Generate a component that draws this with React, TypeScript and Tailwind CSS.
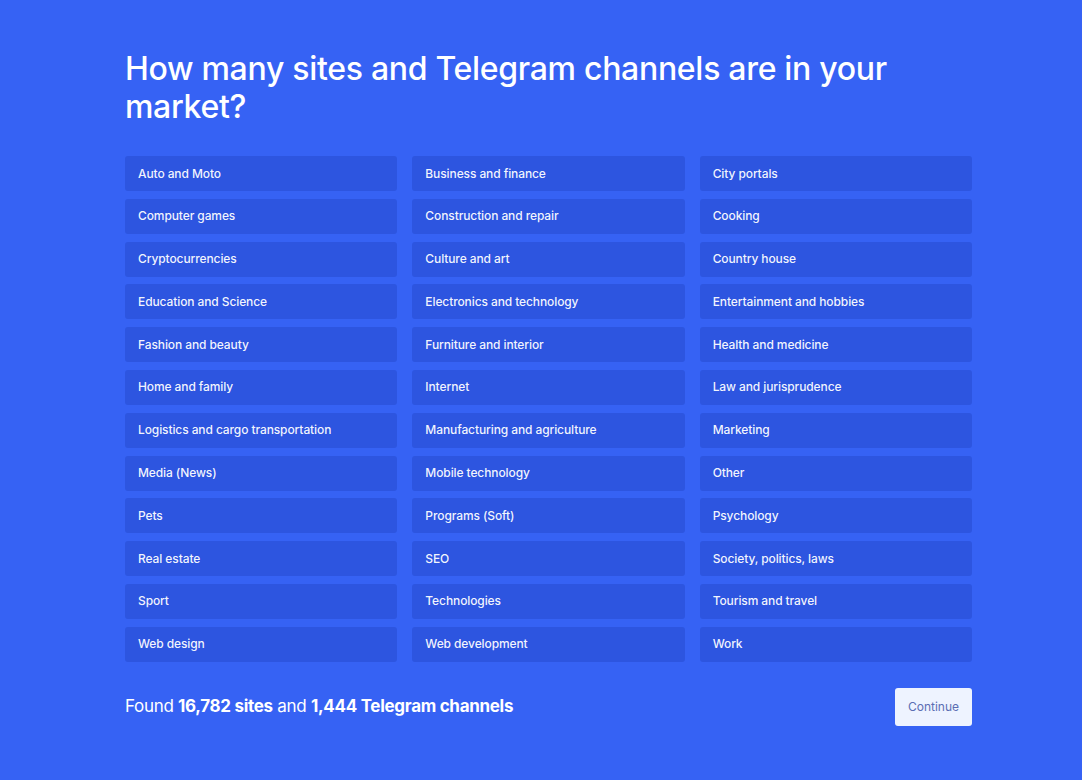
const categories = [
  "Auto and Moto",
  "Business and finance",
  "City portals",
  "Computer games",
  "Construction and repair",
  "Cooking",
  "Cryptocurrencies",
  "Culture and art",
  "Country house",
  "Education and Science",
  "Electronics and technology",
  "Entertainment and hobbies",
  "Fashion and beauty",
  "Furniture and interior",
  "Health and medicine",
  "Home and family",
  "Internet",
  "Law and jurisprudence",
  "Logistics and cargo transportation",
  "Manufacturing and agriculture",
  "Marketing",
  "Media (News)",
  "Mobile technology",
  "Other",
  "Pets",
  "Programs (Soft)",
  "Psychology",
  "Real estate",
  "SEO",
  "Society, politics, laws",
  "Sport",
  "Technologies",
  "Tourism and travel",
  "Web design",
  "Web development",
  "Work",
];

export default function App() {
  return (
    <div className="min-h-[780px] w-full bg-[#3662f4] font-['Inter',sans-serif] text-white">
      <div className="ml-[125px] w-[847px] pt-[50px] pb-[54px]">
        <h1 className="text-[32px] leading-[38px] font-medium tracking-[-0.3px]">
          How many sites and Telegram channels are in your market?
        </h1>

        <div className="mt-[30px] grid grid-cols-3 gap-x-[15px] gap-y-[7.8px]">
          {categories.map((c) => (
            <button
              key={c}
              className="flex h-[35px] items-center rounded-[3px] bg-[#2d55e0] px-[13px] text-left text-[12px] font-medium tracking-[-0.1px] text-white/95"
            >
              {c}
            </button>
          ))}
        </div>

        <div className="mt-[26px] flex items-center justify-between">
          <p className="text-[17px] tracking-[-0.3px]">
            Found <span className="font-bold">16,782 sites</span> and{" "}
            <span className="font-bold">1,444 Telegram channels</span>
          </p>
          <button className="h-[38px] w-[77px] rounded-[3px] bg-[#eef3ff] text-[12px] text-[#5b6db3]">
            Continue
          </button>
        </div>
      </div>
    </div>
  );
}
